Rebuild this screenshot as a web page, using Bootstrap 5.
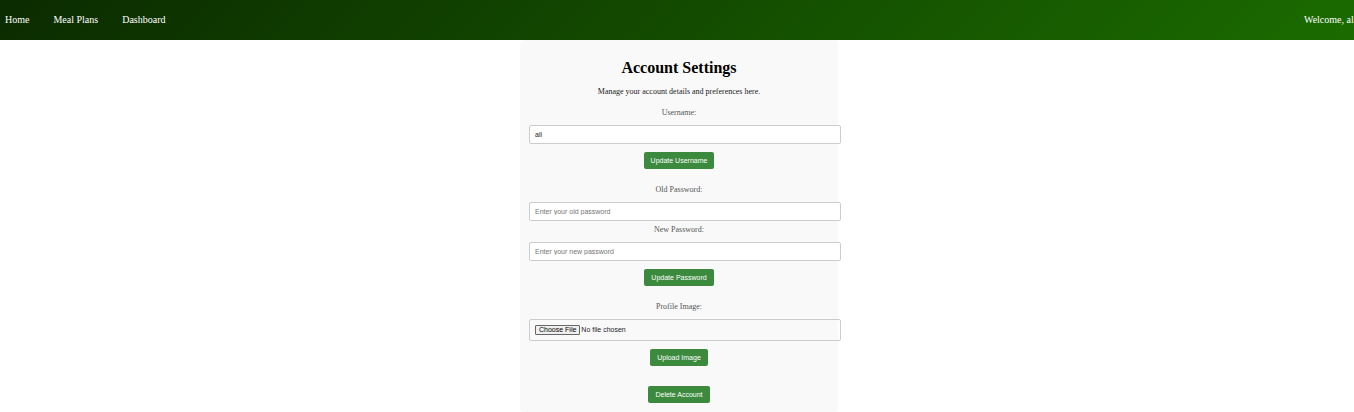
<!DOCTYPE html>
<html lang="en">
<head>
<meta charset="utf-8">
<meta name="viewport" content="width=device-width, initial-scale=1">
<title>Account Settings</title>
<link href="https://cdn.jsdelivr.net/npm/bootstrap@5.3.0/dist/css/bootstrap.min.css" rel="stylesheet">
<style>
  body { font-family: "Liberation Serif", "Times New Roman", serif; font-size: 8px; line-height: 9px; color: #222; background: #fff; }
  .site-nav { height: 40px; padding: 0 0 0 5px; background: linear-gradient(135deg, #0b2b00, #1b6b00); font-size: 10px; line-height: 12px; }
  .site-nav a, .site-nav .welcome { color: #fff; text-decoration: none; white-space: nowrap; }
  .site-links { gap: 24px; }
  .welcome { width: 50px; }
  .page-main { padding-left: 4px; }
  .settings { width: 318px; padding: 19px 9px 9px; background: #f9f9f9; border-radius: 4px; }
  .settings h1 { font-size: 16px; line-height: 18px; font-weight: 700; color: #000; margin: 0 0 10px; }
  .settings p { margin: 0 0 12px; }
  .settings form { margin-bottom: 16px; }
  .settings form:last-of-type { margin-bottom: 12px; }
  .settings label { color: #555; margin: 4px 0 8px; }
  .field { width: calc(100% + 12px); height: 19px; padding: 4px 5px; border: 1px solid #ccc; border-radius: 2px; background: #fff; color: #222; font: 7px/9px "Liberation Sans", Arial, sans-serif; }
  .field::placeholder { color: #757575; opacity: 1; }
  .file-field { height: 22px; padding: 5px; background: transparent; }
  .file-field::file-selector-button { height: 10px; margin: 0 1px 0 0; padding: 0 3px; border: 1px solid #666; border-radius: 1px; background: #efefef; color: #000; font: 7px/8px "Liberation Sans", Arial, sans-serif; }
  .action { margin-top: 8px; height: 17px; padding: 0 7px; border: 0; border-radius: 2px; background: #3b8a3e; color: #fff; font: 7px/17px "Liberation Sans", Arial, sans-serif; }
  .action:hover { background: #2e7031; color: #fff; }
</style>
</head>
<body class="overflow-x-hidden">
<nav class="site-nav d-flex justify-content-between align-items-center">
  <div class="site-links d-flex">
    <a href="#">Home</a>
    <a href="#">Meal Plans</a>
    <a href="#">Dashboard</a>
  </div>
  <span class="welcome">Welcome, ali</span>
</nav>
<main class="page-main d-flex justify-content-center">
  <section class="settings text-center">
    <h1>Account Settings</h1>
    <p>Manage your account details and preferences here.</p>
    <form>
      <label class="d-block" for="username">Username:</label>
      <input class="field d-block" type="text" id="username" value="ali">
      <button class="action btn" type="button">Update Username</button>
    </form>
    <form>
      <label class="d-block" for="old-password">Old Password:</label>
      <input class="field d-block" type="password" id="old-password" placeholder="Enter your old password">
      <label class="d-block" for="new-password">New Password:</label>
      <input class="field d-block" type="password" id="new-password" placeholder="Enter your new password">
      <button class="action btn" type="button">Update Password</button>
    </form>
    <form>
      <label class="d-block" for="profile-image">Profile Image:</label>
      <input class="field file-field d-block" type="file" id="profile-image">
      <button class="action btn" type="button">Upload Image</button>
    </form>
    <button class="action btn" type="button">Delete Account</button>
  </section>
</main>
<script src="https://cdn.jsdelivr.net/npm/bootstrap@5.3.0/dist/js/bootstrap.bundle.min.js"></script>
</body>
</html>
